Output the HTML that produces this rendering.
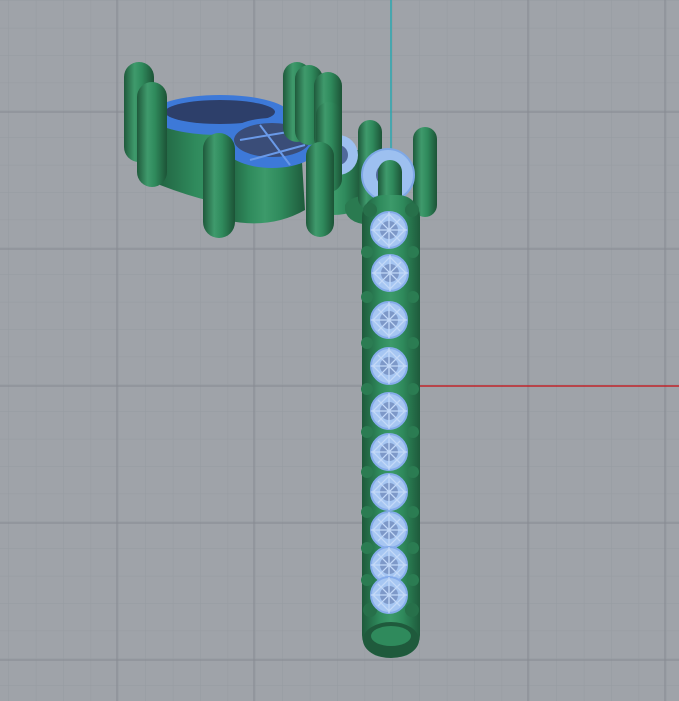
<!DOCTYPE html>
<html><head><meta charset="utf-8"><style>html,body{margin:0;padding:0;background:#9fa3a9;}svg{display:block}</style></head>
<body>
<svg width="679" height="701" viewBox="0 0 679 701" xmlns="http://www.w3.org/2000/svg">
<defs>
<pattern id="minor" width="27.4" height="27.4" patternUnits="userSpaceOnUse" x="8.4" y="0.4">
<path d="M0 0V27.4M0 0H27.4" stroke="#969ba1" stroke-width="1" fill="none"/>
</pattern>
<linearGradient id="cyl" x1="0" x2="1" y1="0" y2="0">
<stop offset="0" stop-color="#1f5a3c"/><stop offset="0.35" stop-color="#3f9a6c"/><stop offset="0.6" stop-color="#2f8a5c"/><stop offset="1" stop-color="#1c5336"/>
</linearGradient>
<linearGradient id="band" x1="0" x2="1">
<stop offset="0" stop-color="#1e5a3b"/><stop offset="0.3" stop-color="#2f8a5c"/><stop offset="0.5" stop-color="#3c9a6a"/><stop offset="0.7" stop-color="#2f8a5c"/><stop offset="1" stop-color="#1e5a3b"/>
</linearGradient>
<g id="gem"><circle r="18" fill="#a6c6f2" stroke="#86acea" stroke-width="2"/><circle r="9" fill="#7d98c8"/><path d="M-16 0L0-16L16 0L0 16Z M-11-11L11 11M11-11L-11 11M-18 0H18M0-18V18" stroke="#c3d9f8" stroke-width="1.3" fill="none"/></g>
</defs>
<rect width="679" height="701" fill="#9fa3a9"/>
<rect width="679" height="701" fill="url(#minor)"/>
<g stroke="#858a91" stroke-width="1">
<path d="M117 0V701M254 0V701M528 0V701M665 0V701M0 112H679M0 249H679M0 523H679M0 660H679"/>
<path d="M0 386H417"/>
</g>
<path d="M391 0V150" stroke="#2aa7b0" stroke-width="1.5"/>
<path d="M417 386H679" stroke="#c0242a" stroke-width="1.5"/>
<path d="M150 110 L300 110 L300 200 Q250 220 160 185 Z" fill="url(#band)"/>
<ellipse cx="220" cy="115" rx="70" ry="20" fill="#3d79d8"/>
<ellipse cx="220" cy="112" rx="55" ry="12" fill="#2d3f6a"/>
<path d="M230 130 L300 130 L305 210 Q270 230 225 220 Z" fill="url(#band)"/>
<ellipse cx="272" cy="143" rx="50" ry="25" fill="#3d79d8"/>
<ellipse cx="272" cy="140" rx="38" ry="17" fill="#3a4d78"/>
<path d="M240 140 L300 130 M250 160 L305 145 M260 125 L290 165" stroke="#6a9ae8" stroke-width="2"/>
<path d="M310 150 L360 150 L360 210 Q330 220 310 210Z" fill="url(#band)"/>
<circle cx="338" cy="155" r="20" fill="#9dc0f0"/><circle cx="338" cy="155" r="10" fill="#50699a"/>
<path d="M345 205 Q350 195 375 195 L375 225 Q348 225 345 210Z" fill="#2a7a50"/>
<g fill="url(#cyl)">
<rect x="124" y="62" width="30" height="100" rx="15"/>
<rect x="137" y="82" width="30" height="105" rx="15"/>
<rect x="283" y="62" width="28" height="80" rx="14"/>
<rect x="295" y="65" width="28" height="80" rx="14"/>
<rect x="314" y="72" width="28" height="80" rx="14"/>
<rect x="316" y="102" width="26" height="90" rx="13"/>
<rect x="203" y="133" width="32" height="105" rx="16"/>
<rect x="306" y="142" width="28" height="95" rx="14"/>
<rect x="358" y="120" width="24" height="90" rx="12"/>
<rect x="413" y="127" width="24" height="90" rx="12"/>
</g>
<circle cx="388" cy="175" r="26" fill="#9dc0f0" stroke="#7fa8e6" stroke-width="2"/>
<circle cx="388" cy="175" r="12" fill="#50699a"/>
<rect x="378" y="160" width="24" height="60" rx="12" fill="url(#cyl)"/>
<rect x="362" y="195" width="58" height="462" rx="22" fill="url(#band)"/>
<ellipse cx="391" cy="640" rx="28" ry="18" fill="#1f5a3c"/>
<ellipse cx="391" cy="636" rx="20" ry="10" fill="#2f8a5c"/>
<g fill="#27704a">
<circle cx="370" cy="210" r="7"/><circle cx="412" cy="210" r="7"/>
<circle cx="370" cy="610" r="7"/><circle cx="412" cy="610" r="7"/>
</g>
<use href="#gem" x="389" y="230"/>
<use href="#gem" x="390" y="273"/>
<use href="#gem" x="389" y="320"/>
<use href="#gem" x="389" y="366"/>
<use href="#gem" x="389" y="411"/>
<use href="#gem" x="389" y="452"/>
<use href="#gem" x="389" y="492"/>
<use href="#gem" x="389" y="530"/>
<use href="#gem" x="389" y="565"/>
<use href="#gem" x="389" y="595"/>
<g fill="#2b7c52">
<circle cx="367" cy="252" r="6"/><circle cx="413" cy="252" r="6"/>
<circle cx="367" cy="297" r="6"/><circle cx="413" cy="297" r="6"/>
<circle cx="367" cy="343" r="6"/><circle cx="413" cy="343" r="6"/>
<circle cx="367" cy="389" r="6"/><circle cx="413" cy="389" r="6"/>
<circle cx="367" cy="432" r="6"/><circle cx="413" cy="432" r="6"/>
<circle cx="367" cy="472" r="6"/><circle cx="413" cy="472" r="6"/>
<circle cx="367" cy="512" r="6"/><circle cx="413" cy="512" r="6"/>
<circle cx="367" cy="548" r="6"/><circle cx="413" cy="548" r="6"/>
<circle cx="367" cy="580" r="6"/><circle cx="413" cy="580" r="6"/>
</g>
</svg>
</body></html>
